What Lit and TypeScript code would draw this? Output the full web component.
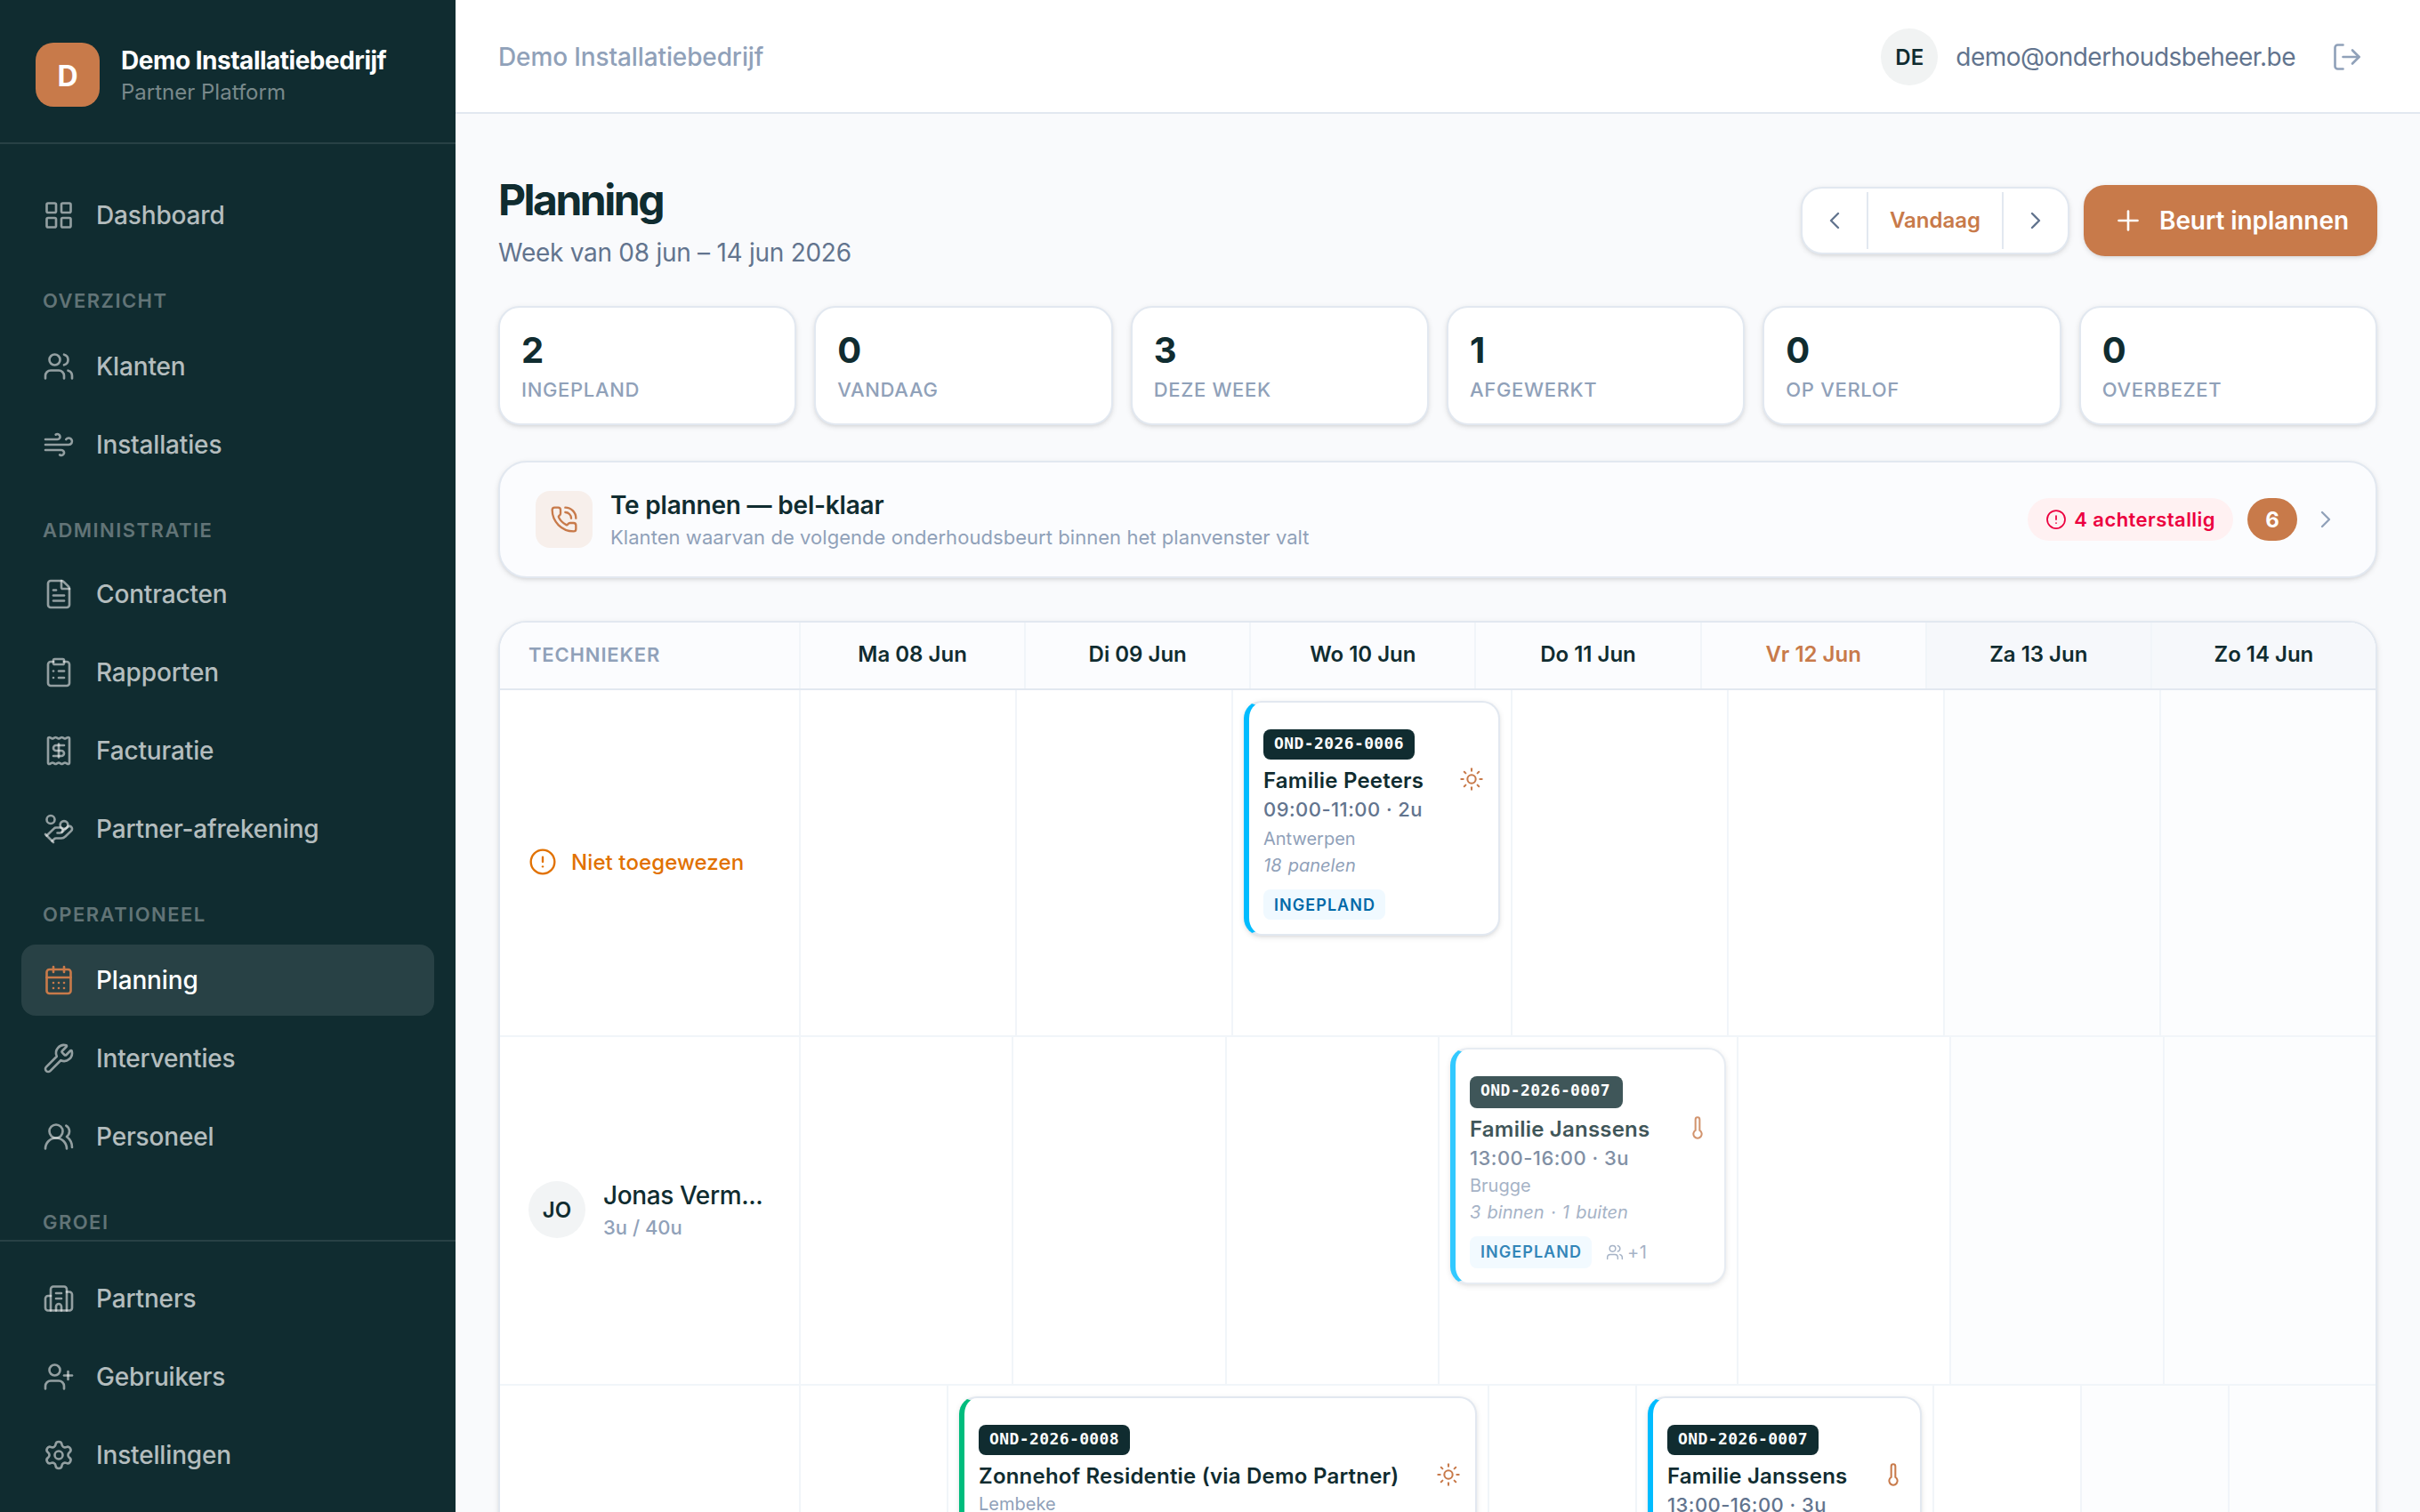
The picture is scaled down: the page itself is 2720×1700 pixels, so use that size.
import { LitElement, html, css, svg, nothing } from "lit";
import { customElement, property } from "lit/decorators.js";
import { classMap } from "lit/directives/class-map.js";

const p = (...ds: string[]) => ds.map((d) => svg`<path d=${d}></path>`);

const ICONS: Record<string, unknown> = {
  grid: svg`<rect width="7" height="7" x="3" y="3" rx="1"/><rect width="7" height="7" x="14" y="3" rx="1"/><rect width="7" height="7" x="14" y="14" rx="1"/><rect width="7" height="7" x="3" y="14" rx="1"/>`,
  users: [
    p("M16 21v-2a4 4 0 0 0-4-4H6a4 4 0 0 0-4 4v2", "M16 3.128a4 4 0 0 1 0 7.744", "M22 21v-2a4 4 0 0 0-3-3.87"),
    svg`<circle cx="9" cy="7" r="4"/>`,
  ],
  wind: p("M12.8 19.6A2 2 0 1 0 14 16H2", "M17.5 8a2.5 2.5 0 1 1 2 4H2", "M9.8 4.4A2 2 0 1 1 11 8H2"),
  file: p(
    "M6 22a2 2 0 0 1-2-2V4a2 2 0 0 1 2-2h8a2.4 2.4 0 0 1 1.704.706l3.588 3.588A2.4 2.4 0 0 1 20 8v12a2 2 0 0 1-2 2z",
    "M14 2v5a1 1 0 0 0 1 1h5",
    "M10 9H8",
    "M16 13H8",
    "M16 17H8"
  ),
  clipboard: [
    svg`<rect width="8" height="4" x="8" y="2" rx="1"/>`,
    p("M16 4h2a2 2 0 0 1 2 2v14a2 2 0 0 1-2 2H6a2 2 0 0 1-2-2V6a2 2 0 0 1 2-2h2", "M12 11h4", "M12 16h4", "M8 11h.01", "M8 16h.01"),
  ],
  receipt: p(
    "M12 17V7",
    "M16 8h-6a2 2 0 0 0 0 4h4a2 2 0 0 1 0 4H8",
    "M4 3a1 1 0 0 1 1-1 1.3 1.3 0 0 1 .7.2l.933.6a1.3 1.3 0 0 0 1.4 0l.934-.6a1.3 1.3 0 0 1 1.4 0l.933.6a1.3 1.3 0 0 0 1.4 0l.933-.6a1.3 1.3 0 0 1 1.4 0l.934.6a1.3 1.3 0 0 0 1.4 0l.933-.6A1.3 1.3 0 0 1 19 2a1 1 0 0 1 1 1v18a1 1 0 0 1-1 1 1.3 1.3 0 0 1-.7-.2l-.933-.6a1.3 1.3 0 0 0-1.4 0l-.934.6a1.3 1.3 0 0 1-1.4 0l-.933-.6a1.3 1.3 0 0 0-1.4 0l-.933.6a1.3 1.3 0 0 1-1.4 0l-.934-.6a1.3 1.3 0 0 0-1.4 0l-.933.6a1.3 1.3 0 0 1-.7.2 1 1 0 0 1-1-1z"
  ),
  coins: [
    p(
      "M11 15h2a2 2 0 1 0 0-4h-3c-.6 0-1.1.2-1.4.6L3 17",
      "m7 21 1.6-1.4c.3-.4.8-.6 1.4-.6h4c1.1 0 2.1-.4 2.8-1.2l4.6-4.4a2 2 0 0 0-2.75-2.91l-4.2 3.9",
      "m2 16 6 6"
    ),
    svg`<circle cx="16" cy="9" r="2.9"/><circle cx="6" cy="5" r="3"/>`,
  ],
  calendar: [
    p("M8 2v4", "M16 2v4", "M3 10h18", "M8 14h.01", "M12 14h.01", "M16 14h.01", "M8 18h.01", "M12 18h.01", "M16 18h.01"),
    svg`<rect width="18" height="18" x="3" y="4" rx="2"/>`,
  ],
  wrench: p(
    "M14.7 6.3a1 1 0 0 0 0 1.4l1.6 1.6a1 1 0 0 0 1.4 0l3.106-3.105c.32-.322.863-.22.983.218a6 6 0 0 1-8.259 7.057l-7.91 7.91a1 1 0 0 1-2.999-3l7.91-7.91a6 6 0 0 1 7.057-8.259c.438.12.54.662.219.984z"
  ),
  team: [
    p("M18 21a8 8 0 0 0-16 0", "M22 20c0-3.37-2-6.5-4-8a5 5 0 0 0-.45-8.3"),
    svg`<circle cx="10" cy="8" r="5"/>`,
  ],
  building: p(
    "M10 12h4",
    "M10 8h4",
    "M14 21v-3a2 2 0 0 0-4 0v3",
    "M6 10H4a2 2 0 0 0-2 2v7a2 2 0 0 0 2 2h16a2 2 0 0 0 2-2V9a2 2 0 0 0-2-2h-2",
    "M6 21V5a2 2 0 0 1 2-2h8a2 2 0 0 1 2 2v16"
  ),
  userPlus: [
    p("M16 21v-2a4 4 0 0 0-4-4H6a4 4 0 0 0-4 4v2", "M19 8v6", "M22 11h-6"),
    svg`<circle cx="9" cy="7" r="4"/>`,
  ],
  settings: [
    p(
      "M9.671 4.136a2.34 2.34 0 0 1 4.659 0 2.34 2.34 0 0 0 3.319 1.915 2.34 2.34 0 0 1 2.33 4.033 2.34 2.34 0 0 0 0 3.831 2.34 2.34 0 0 1-2.33 4.033 2.34 2.34 0 0 0-3.319 1.915 2.34 2.34 0 0 1-4.659 0 2.34 2.34 0 0 0-3.32-1.915 2.34 2.34 0 0 1-2.33-4.033 2.34 2.34 0 0 0 0-3.831A2.34 2.34 0 0 1 6.35 6.051a2.34 2.34 0 0 0 3.319-1.915"
    ),
    svg`<circle cx="12" cy="12" r="3"/>`,
  ],
  logout: p("M9 21H5a2 2 0 0 1-2-2V5a2 2 0 0 1 2-2h4", "m16 17 5-5-5-5", "M21 12H9"),
  left: p("m15 18-6-6 6-6"),
  right: p("m9 18 6-6-6-6"),
  plus: p("M5 12h14", "M12 5v14"),
  phone: p(
    "M13 2a9 9 0 0 1 9 9",
    "M13 6a5 5 0 0 1 5 5",
    "M13.832 16.568a1 1 0 0 0 1.213-.303l.355-.465A2 2 0 0 1 17 15h3a2 2 0 0 1 2 2v3a2 2 0 0 1-2 2A18 18 0 0 1 2 4a2 2 0 0 1 2-2h3a2 2 0 0 1 2 2v3a2 2 0 0 1-.8 1.6l-.468.351a1 1 0 0 0-.292 1.233 14 14 0 0 0 6.392 6.384"
  ),
  alert: [svg`<circle cx="12" cy="12" r="10"/>`, p("M12 8v4", "M12 16h.01")],
  sun: [
    svg`<circle cx="12" cy="12" r="4"/>`,
    p("M12 2v2", "M12 20v2", "m4.93 4.93 1.41 1.41", "m17.66 17.66 1.41 1.41", "M2 12h2", "M20 12h2", "m6.34 17.66-1.41 1.41", "m19.07 4.93-1.41 1.41"),
  ],
  thermo: p("M14 4v10.54a4 4 0 1 1-4 0V4a2 2 0 0 1 4 0Z"),
};

@customElement("ui-icon")
class UiIcon extends LitElement {
  @property() name = "";
  static styles = css`
    :host { display: block; flex: none; width: 36px; height: 36px; }
    svg { display: block; width: 100%; height: 100%; }
  `;
  render() {
    return html`<svg viewBox="0 0 24 24" fill="none" stroke="currentColor" stroke-width="1.75"
      stroke-linecap="round" stroke-linejoin="round">${ICONS[this.name]}</svg>`;
  }
}

type NavItem = [icon: string, label: string];
const NAV: { title?: string; items: NavItem[] }[] = [
  { items: [["grid", "Dashboard"]] },
  { title: "Overzicht", items: [["users", "Klanten"], ["wind", "Installaties"]] },
  {
    title: "Administratie",
    items: [["file", "Contracten"], ["clipboard", "Rapporten"], ["receipt", "Facturatie"], ["coins", "Partner-afrekening"]],
  },
  { title: "Operationeel", items: [["calendar", "Planning"], ["wrench", "Interventies"], ["team", "Personeel"]] },
  { title: "Groei", items: [] },
];
const FOOT: NavItem[] = [["building", "Partners"], ["userPlus", "Gebruikers"], ["settings", "Instellingen"]];

@customElement("side-nav")
class SideNav extends LitElement {
  static styles = css`
    :host { display: flex; flex-direction: column; width: 512px; height: 100%; background: #102c30; color: #fff; flex: none; }
    .brand { display: flex; align-items: center; gap: 24px; height: 162px; box-sizing: border-box; padding: 8px 40px 0; border-bottom: 2px solid rgba(255, 255, 255, 0.1); }
    .logo { display: grid; place-items: center; width: 72px; height: 72px; border-radius: 20px; background: #c87a4a; font-size: 32px; font-weight: 700; padding-top: 2px; box-sizing: border-box; }
    .label { padding-top: 2px; }
    .name { font-size: 28px; font-weight: 700; line-height: 38px; letter-spacing: -0.5px; }
    .sub { font-size: 24px; line-height: 34px; color: rgba(255, 255, 255, 0.45); }
    nav { flex: 1; min-height: 0; overflow: hidden; padding: 40px 24px 0; }
    .title { height: 90px; box-sizing: border-box; padding: 40px 24px 0; font-size: 22px; line-height: 33px; font-weight: 600; letter-spacing: 1.46px; text-transform: uppercase; color: rgba(255, 255, 255, 0.35); }
    .title.tight { height: 88px; }
    .list { display: flex; flex-direction: column; gap: 8px; }
    .item { display: flex; align-items: center; gap: 24px; height: 80px; padding: 0 24px; border-radius: 16px; font-size: 28px; font-weight: 500; letter-spacing: -0.16px; color: rgba(255, 255, 255, 0.7); }
    .item ui-icon { color: rgba(255, 255, 255, 0.55); }
    .item.active { background: rgba(255, 255, 255, 0.1); color: #fff; }
    .item.active ui-icon { color: #c87a4a; }
    .foot { padding: 24px; border-top: 2px solid rgba(255, 255, 255, 0.1); }
  `;
  item([icon, label]: NavItem) {
    return html`<div class=${classMap({ item: true, active: label === "Planning" })}><ui-icon name=${icon}></ui-icon><span>${label}</span></div>`;
  }
  render() {
    return html`
      <div class="brand">
        <div class="logo">D</div>
        <div class="label"><div class="name">Demo Installatiebedrijf</div><div class="sub">Partner Platform</div></div>
      </div>
      <nav>
        ${NAV.map((g, i) => html`${g.title ? html`<div class=${classMap({ title: true, tight: i === 2 })}>${g.title}</div>` : nothing}
          <div class="list">${g.items.map((i) => this.item(i))}</div>`)}
      </nav>
      <div class="foot list">${FOOT.map((i) => this.item(i))}</div>
    `;
  }
}

interface Job {
  code: string;
  name: string;
  icon: string;
  time?: string;
  place: string;
  detail?: string;
  tone: "sky" | "green";
  tall?: boolean;
  extra?: string;
}

@customElement("job-card")
class JobCard extends LitElement {
  @property({ attribute: false }) job!: Job;
  static styles = css`
    .card { box-sizing: border-box; padding: 30px 16px 16px; border: 2px solid #e2e8f0; border-left: 6px solid #00bcff; border-radius: 20px; background: #fff; box-shadow: 0 2px 6px rgba(0, 0, 0, 0.1), 0 2px 4px -2px rgba(0, 0, 0, 0.1); }
    .green { border-left-color: #00bc7d; }
    .tall { opacity: 0.8; }
    .code { display: block; width: max-content; height: 34px; padding: 0 12px; border-radius: 8px; background: #102c30; color: #fff; font: 700 18px/31px "DejaVu Sans Mono", monospace; letter-spacing: 0.4px; }
    .tall .code, .tall .tag { height: 36px; }
    .tall .code { padding-right: 14px; }
    .head { display: flex; align-items: center; justify-content: space-between; height: 32px; margin-top: 8px; }
    .name { font-size: 24px; line-height: 32px; font-weight: 600; letter-spacing: 0.22px; color: #102c30; white-space: nowrap; }
    .head ui-icon { width: 28px; height: 28px; color: #c87a4a; position: relative; top: -2px; }
    .time { font-size: 22px; line-height: 32px; font-weight: 500; letter-spacing: 0.45px; color: #62748e; white-space: nowrap; }
    .place, .detail { font-size: 20px; line-height: 30px; color: #90a1b9; }
    .place { margin-top: 2px; }
    .tall .place { margin-top: 0; }
    .notime .place { margin-top: 0; }
    .detail { font-style: italic; word-spacing: 1.6px; }
    .foot { display: flex; align-items: center; gap: 16px; margin-top: 12px; }
    .tag { box-sizing: border-box; height: 34px; line-height: 35px; padding: 0 11px 0 12px; border-radius: 8px; background: #f0f9ff; color: #0069a8; font-size: 18px; font-weight: 600; letter-spacing: 1.05px; }
    .extra { display: flex; align-items: center; gap: 4px; font-size: 20px; letter-spacing: 0.5px; color: #90a1b9; }
    .extra ui-icon { width: 20px; height: 20px; }
  `;
  render() {
    const j = this.job;
    return html`<div class=${classMap({ card: true, green: j.tone === "green", tall: !!j.tall, notime: !j.time })}>
      <span class="code">${j.code}</span>
      <div class="head"><span class="name">${j.name}</span><ui-icon name=${j.icon}></ui-icon></div>
      ${j.time ? html`<div class="time">${j.time}</div>` : nothing}
      <div class="place">${j.place}</div>
      ${j.detail ? html`<div class="detail">${j.detail}</div>` : nothing}
      <div class="foot"><span class="tag">INGEPLAND</span>
        ${j.extra ? html`<span class="extra"><ui-icon name="users"></ui-icon>${j.extra}</span>` : nothing}</div>
    </div>`;
  }
}

const JANSSENS: Job = {
  code: "OND-2026-0007", name: "Familie Janssens", icon: "thermo", time: "13:00-16:00 · 3u",
  place: "Brugge", detail: "3 binnen · 1 buiten", tone: "sky", extra: "+1",
};
const ROWS: { cls: string; jobs: (Job | null)[] }[] = [
  {
    cls: "r1",
    jobs: [null, null, { code: "OND-2026-0006", name: "Familie Peeters", icon: "sun", time: "09:00-11:00 · 2u", place: "Antwerpen", detail: "18 panelen", tone: "sky" }, null, null, null, null],
  },
  { cls: "r2", jobs: [null, null, null, { ...JANSSENS, tall: true }, null, null, null] },
  {
    cls: "r3",
    jobs: [null, { code: "OND-2026-0008", name: "Zonnehof Residentie (via Demo Partner)", icon: "sun", place: "Lembeke", tone: "green" }, null, JANSSENS, null, null, null],
  },
];
const DAYS = ["Ma 08 Jun", "Di 09 Jun", "Wo 10 Jun", "Do 11 Jun", "Vr 12 Jun", "Za 13 Jun", "Zo 14 Jun"];
const STATS: [string, string][] = [["2", "Ingepland"], ["0", "Vandaag"], ["3", "Deze week"], ["1", "Afgewerkt"], ["0", "Op verlof"], ["0", "Overbezet"]];

@customElement("app-root")
class AppRoot extends LitElement {
  static styles = css`
    :host { display: flex; width: 2720px; height: 1700px; overflow: hidden; background: #f9fafc; color: #102c30; font-family: Inter, "Liberation Sans", sans-serif; }
    .main { flex: 1; min-width: 0; display: flex; flex-direction: column; }
    .top { display: flex; align-items: center; height: 128px; box-sizing: border-box; padding: 2px 48px 0; border-bottom: 2px solid #e2e8f0; background: #fff; font-size: 28px; flex: none; }
    .org { flex: 1; font-weight: 500; letter-spacing: -0.12px; color: #90a1b9; }
    .avatar { display: grid; place-items: center; width: 64px; height: 64px; border-radius: 50%; background: #f1f3f3; font-size: 24px; font-weight: 600; flex: none; }
    .mail { margin: 0 40px 0 20px; letter-spacing: -0.53px; color: #62748e; }
    .top ui-icon { margin-right: 16px; color: #90a1b9; }
    .content { padding: 64px 48px 0; }
    .row { display: flex; align-items: center; justify-content: space-between; }
    h1 { margin: 0 0 6px; font-size: 48px; line-height: 66px; font-weight: 700; letter-spacing: -2.5px; }
    .week { font-size: 28px; line-height: 40px; letter-spacing: -0.27px; color: #62748e; }
    .actions { display: flex; align-items: center; gap: 16px; }
    .shadow { box-shadow: 0 2px 6px rgba(0, 0, 0, 0.1), 0 2px 4px -2px rgba(0, 0, 0, 0.1); }
    .pager { display: flex; align-items: center; height: 76px; box-sizing: border-box; border: 2px solid #e2e8f0; border-radius: 24px; background: #fff; color: #62748e; }
    .pager ui-icon { width: 32px; height: 32px; margin: 0 20px; }
    .today { box-sizing: border-box; width: 154px; text-align: center; line-height: 64px; border: solid #e2e8f0; border-width: 0 2px; font-size: 24px; font-weight: 600; color: #c87a4a; }
    .cta { display: flex; align-items: center; gap: 17px; box-sizing: border-box; width: 330px; height: 80px; padding: 0 32px; border-radius: 24px; background: #c87a4a; color: #fff; font-size: 28px; font-weight: 600; letter-spacing: -0.07px; white-space: nowrap; }
    .stats { display: grid; grid-template-columns: repeat(6, 1fr); gap: 20px; margin-top: 40px; }
    .stat { box-sizing: border-box; height: 134px; padding: 20px 24px; border: 2px solid #e2e8f0; border-radius: 24px; background: #fff; }
    .num { font-size: 40px; line-height: 56px; font-weight: 700; }
    .lab { font-size: 22px; line-height: 33px; font-weight: 500; letter-spacing: 0.67px; text-transform: uppercase; color: #90a1b9; }
    .call { display: flex; align-items: center; box-sizing: border-box; height: 132px; margin-top: 40px; padding: 0 40px; border: 2px solid #e2e8f0; border-radius: 32px; background: #fbfcfe; }
    .tile { display: grid; place-items: center; width: 64px; height: 64px; border-radius: 16px; background: #f7efeb; color: #c87a4a; margin-right: 20px; }
    .tile ui-icon, .call > ui-icon { width: 32px; height: 32px; }
    .call > ui-icon { margin-left: 16px; color: #90a1b9; }
    .ct { flex: 1; }
    .ct b { display: block; font-size: 28px; line-height: 40px; font-weight: 600; letter-spacing: -0.2px; }
    .ct span { display: block; font-size: 22px; line-height: 32px; letter-spacing: 0.05px; color: #90a1b9; }
    .late { display: flex; align-items: center; gap: 8px; height: 48px; padding: 0 20px; border-radius: 24px; background: #fff1f2; color: #ec003f; font-size: 22px; font-weight: 600; letter-spacing: 0.45px; }
    .late ui-icon { width: 24px; height: 24px; }
    .count { display: grid; place-items: center; width: 56px; height: 48px; margin-left: 16px; border-radius: 24px; background: #c87a4a; color: #fff; font-size: 24px; font-weight: 700; }
    .table { margin-top: 48px; height: 1200px; border: 2px solid #e2e8f0; border-radius: 32px; overflow: hidden; background: #fff; }
    .tr { display: grid; box-sizing: border-box; border-bottom: 2px solid #f1f5f9; }
    .th { height: 76px; grid-template-columns: 336px repeat(7, 1fr); border-bottom-color: #e2e8f0; background: #fbfcfe; font-size: 24px; font-weight: 600; text-align: center; line-height: 72px; }
    .r1 { height: 390px; grid-template-columns: 336px 243fr 243fr 314fr 243fr 243fr 243fr 243fr; }
    .r2 { height: 392px; grid-template-columns: 336px 239.33fr 239.33fr 239.33fr 336fr 239.33fr 239.33fr 239.33fr; }
    .r3 { height: 392px; grid-template-columns: 336px 166fr 608fr 166fr 334fr 166fr 166fr 166fr; }
    .td { min-width: 0; border-left: 2px solid #f1f5f9; }
    .tr:not(.th) .td { padding: 12px; }
    .td:nth-child(n + 7) { background: #fcfdfe; }
    .th .td:nth-child(n + 7) { background: #f6f8fb; }
    .today-col { color: #c87a4a; }
    .tech { padding-left: 32px; text-align: left; font-size: 22px; letter-spacing: 0.85px; color: #90a1b9; }
    .who { display: flex; align-items: center; padding: 0 32px 2px; }
    .who .avatar { margin-right: 20px; background: #f2f4f5; }
    .who b { display: block; font-size: 28px; line-height: 40px; font-weight: 500; letter-spacing: -0.4px; white-space: nowrap; }
    .who span { display: block; font-size: 22px; line-height: 32px; font-weight: 500; color: #90a1b9; }
    .un { gap: 16px; color: #e17100; font-size: 24px; font-weight: 500; letter-spacing: 0.1px; }
    .un ui-icon { width: 32px; height: 32px; }
  `;
  who(cls: string) {
    if (cls === "r1") return html`<div class="who un"><ui-icon name="alert"></ui-icon>Niet toegewezen</div>`;
    if (cls === "r2") return html`<div class="who"><div class="avatar">JO</div><div><b>Jonas Verm...</b><span>3u / 40u</span></div></div>`;
    return html`<div class="who"></div>`;
  }
  render() {
    return html`
      <side-nav></side-nav>
      <div class="main">
        <div class="top">
          <div class="org">Demo Installatiebedrijf</div>
          <div class="avatar">DE</div>
          <div class="mail">demo@onderhoudsbeheer.be</div>
          <ui-icon name="logout"></ui-icon>
        </div>
        <div class="content">
          <div class="row">
            <div><h1>Planning</h1><div class="week">Week van 08 jun – 14 jun 2026</div></div>
            <div class="actions">
              <div class="pager shadow"><ui-icon name="left"></ui-icon><div class="today">Vandaag</div><ui-icon name="right"></ui-icon></div>
              <div class="cta shadow"><ui-icon name="plus"></ui-icon>Beurt inplannen</div>
            </div>
          </div>
          <div class="stats">
            ${STATS.map(([n, l]) => html`<div class="stat shadow"><div class="num">${n}</div><div class="lab">${l}</div></div>`)}
          </div>
          <div class="call shadow">
            <div class="tile"><ui-icon name="phone"></ui-icon></div>
            <div class="ct"><b>Te plannen — bel-klaar</b><span>Klanten waarvan de volgende onderhoudsbeurt binnen het planvenster valt</span></div>
            <div class="late"><ui-icon name="alert"></ui-icon>4 achterstallig</div>
            <div class="count">6</div>
            <ui-icon name="right"></ui-icon>
          </div>
          <div class="table shadow">
            <div class="tr th">
              <div class="tech">TECHNIEKER</div>
              ${DAYS.map((d, i) => html`<div class=${classMap({ td: true, "today-col": i === 4 })}>${d}</div>`)}
            </div>
            ${ROWS.map((r) => html`<div class="tr ${r.cls}">${this.who(r.cls)}
              ${r.jobs.map((j) => html`<div class="td">${j ? html`<job-card .job=${j}></job-card>` : nothing}</div>`)}</div>`)}
          </div>
        </div>
      </div>
    `;
  }
}
